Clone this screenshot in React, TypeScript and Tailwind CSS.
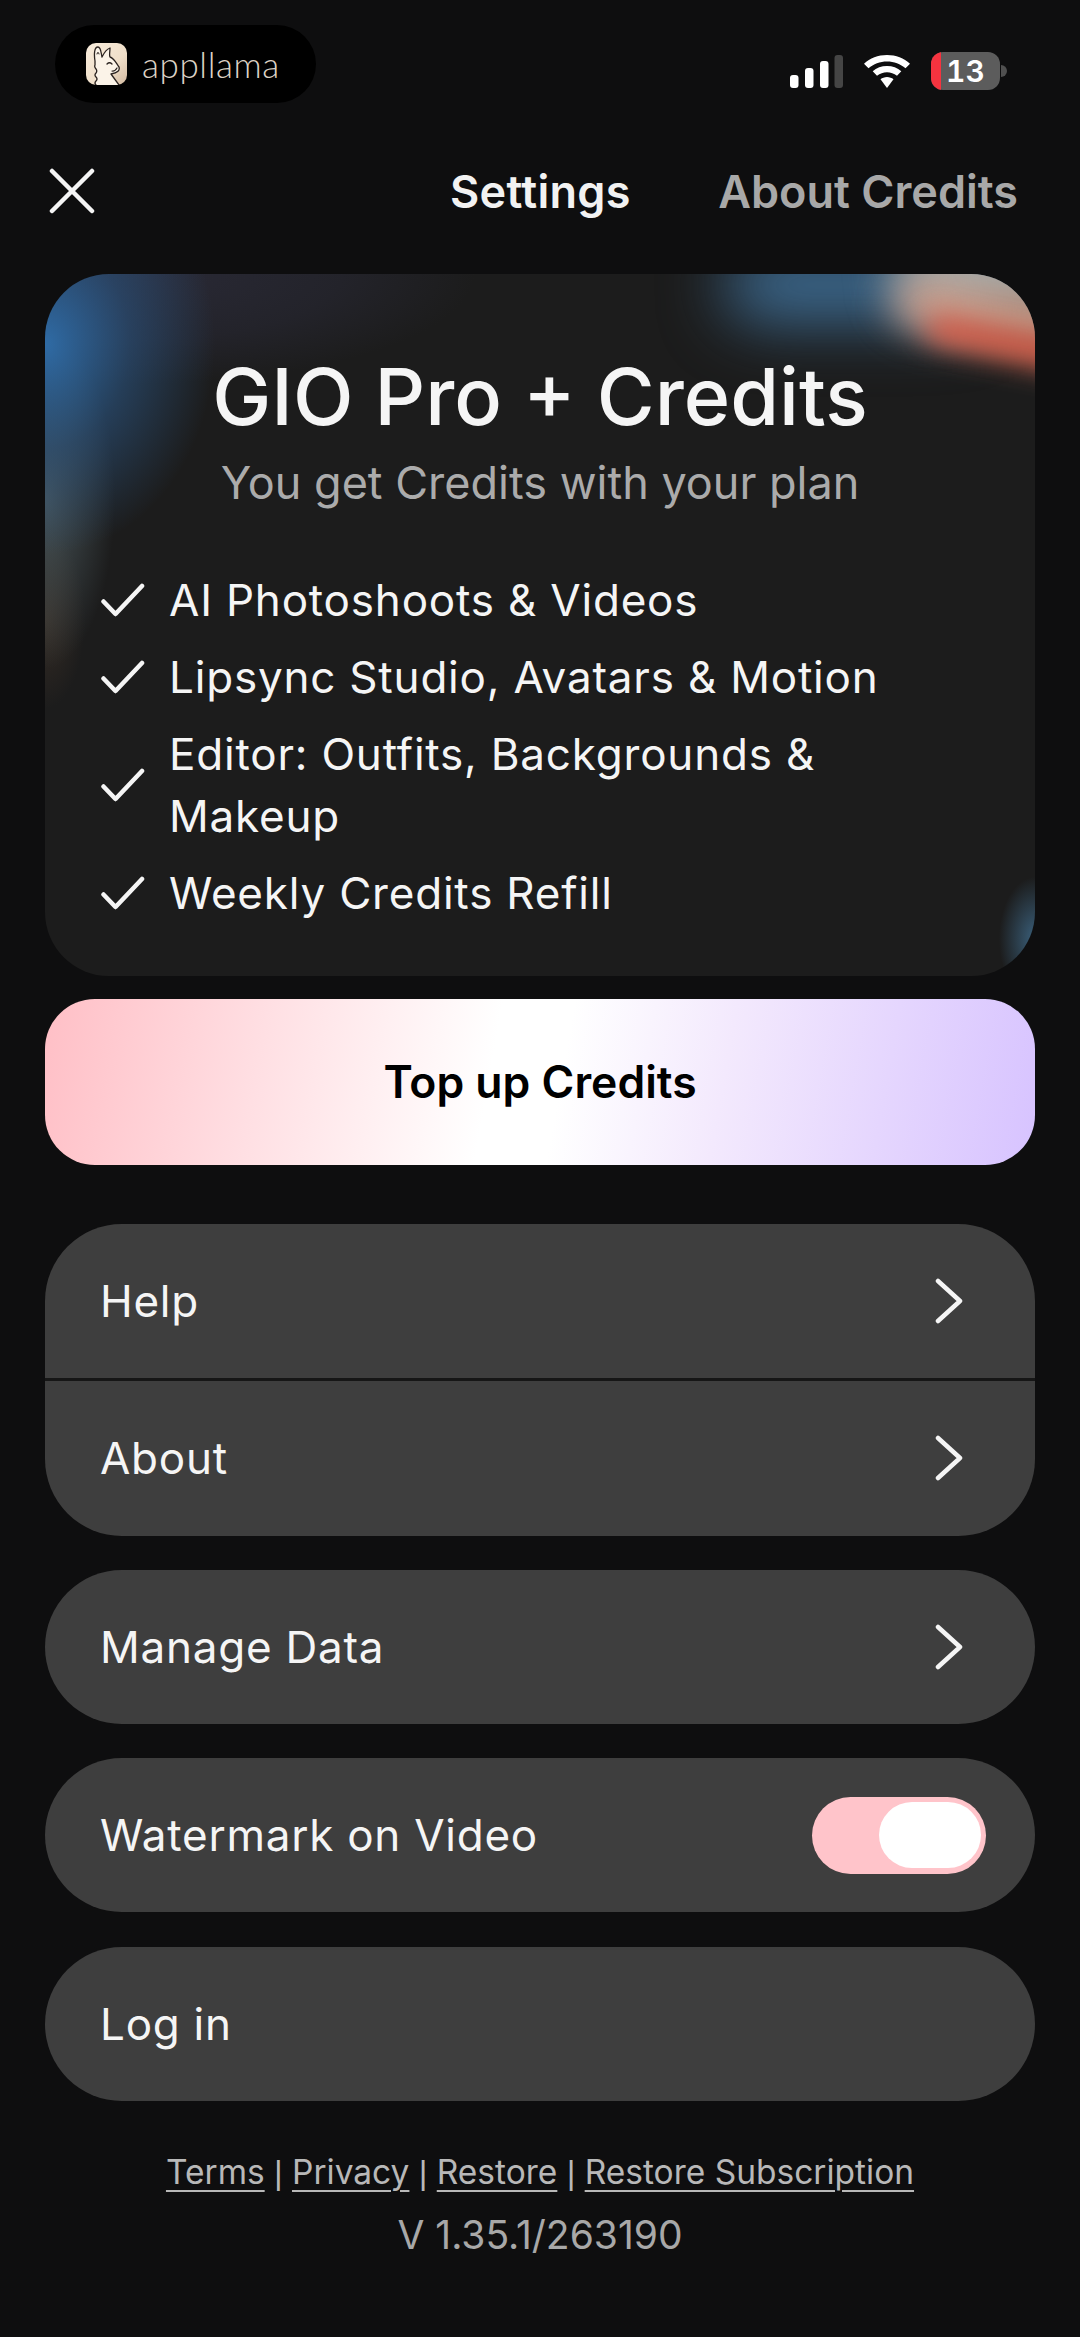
const font = "font-['Inter','Liberation_Sans',sans-serif]";

function Check() {
  return (
    <svg width="44" height="34" viewBox="0 0 44 34" fill="none" className="shrink-0">
      <path d="M2.5 18.5 L14.5 31 L41 3" stroke="#f5f5f5" strokeWidth="4.5" strokeLinecap="round" strokeLinejoin="round" />
    </svg>
  );
}

function Chevron() {
  return (
    <svg width="30" height="46" viewBox="0 0 30 46" fill="none">
      <path d="M4 3 L26 23 L4 43" stroke="#f5f5f5" strokeWidth="4.5" strokeLinecap="round" strokeLinejoin="round" />
    </svg>
  );
}

function Llama() {
  return (
    <svg width="41" height="42" viewBox="0 0 41 42">
      <defs>
        <linearGradient id="lg" x1="0" y1="0" x2="1" y2="1">
          <stop offset="0" stopColor="#f8ecdc" />
          <stop offset="0.6" stopColor="#f0dfc9" />
          <stop offset="1" stopColor="#d2b9a0" />
        </linearGradient>
      </defs>
      <rect width="41" height="42" rx="10" fill="url(#lg)" />
      <path d="M9 18 C8 12 8 4 12 4 C15 4 15 10 16 14 C18 10 21 6 24 5 C24 9 23 12 24 14 C28 15 30 20 33 24 C34 27 32 30 25 31 L33 42 L10 42 Z" fill="#fbf3e8" />
      <path d="M10 42 q-2 -2 0 -4 q2 -2 0 -4 q-2 -2 0 -4 q1.500 -2 0 -4 q-2 -2 -1 -4 L9 18 C8 12 8 4 12 4 C15 4 15 10 16 14 C18 10 21 6 24 5 C24 9 23 12 24 14 C28 15 30 20 33 24 C34 27 32 30 25 31 L33 42" fill="none" stroke="#2b2320" strokeWidth="1.300" strokeLinecap="round" strokeLinejoin="round" />
      <path d="M11 11 q1 -4 2 0" fill="none" stroke="#2b2320" strokeWidth="1" strokeLinecap="round" />
      <path d="M21 21 q2.500 -2.500 5 0" fill="none" stroke="#2b2320" strokeWidth="1.300" strokeLinecap="round" />
      <path d="M26 28 q3 0.500 5 -3" fill="none" stroke="#2b2320" strokeWidth="1.200" strokeLinecap="round" />
    </svg>
  );
}

function Row({ label, chevron = true }: { label: string; chevron?: boolean }) {
  return (
    <div className="h-[154px] flex items-center justify-between pl-[55px] pr-[71px]">
      <span className="text-[44px] tracking-[0.75px] leading-none text-[#f5f5f5]">{label}</span>
      {chevron && <Chevron />}
    </div>
  );
}

function Sep() {
  return <span className="font-['Liberation_Sans',sans-serif]"> | </span>;
}

function Link({ children }: { children: string }) {
  return <span className="underline decoration-2 underline-offset-[6px]">{children}</span>;
}

export default function App() {
  return (
    <div className={`w-[1080px] h-[2337px] bg-[#0e0e0f] overflow-hidden ${font}`}>
      {/* status bar */}
      <div className="h-[164px] flex items-start justify-between pt-[25px] pl-[55px] pr-[73px]">
        <div className="w-[261px] h-[78px] rounded-full bg-black flex items-center pl-[31px] gap-[15px]">
          <Llama />
          <span className="font-['Lato',sans-serif] font-light text-[35px] tracking-[0.6px] leading-none text-[#dcd2c5]">appllama</span>
        </div>
        <div className="flex items-center gap-[21px] pt-[27px]">
          <svg width="53" height="33" viewBox="0 0 53 33">
            <rect x="0" y="20" width="8.500" height="13" rx="3" fill="#fff" />
            <rect x="15" y="13" width="8.500" height="20" rx="3" fill="#fff" />
            <rect x="30" y="6" width="8.500" height="27" rx="3" fill="#fff" />
            <rect x="44.500" y="0" width="8.500" height="33" rx="3" fill="#454545" />
          </svg>
          <svg width="46" height="33" viewBox="0 0 46 36" preserveAspectRatio="none" fill="#fff">
            <path d="M23 0 C32 0 40 3.500 46 9.500 L41.500 14.500 C36.500 9.800 30 7 23 7 C16 7 9.500 9.800 4.500 14.500 L0 9.500 C6 3.500 14 0 23 0 Z" />
            <path d="M23 12 C28.500 12 33.500 14 37.300 17.700 L33 22.500 C30 20 26.700 18.700 23 18.700 C19.300 18.700 16 20 13 22.500 L8.700 17.700 C12.500 14 17.500 12 23 12 Z" />
            <path d="M23 24 C25.500 24 27.800 25 29.500 26.500 L23 36 L16.500 26.500 C18.200 25 20.500 24 23 24 Z" />
          </svg>
          <div className="flex items-center">
            <div className="relative w-[69px] h-[38px] rounded-[12px] bg-[#5c5c5c] overflow-hidden flex items-center justify-center">
              <div className="absolute left-0 top-0 bottom-0 w-[10px] bg-[#f5333f]" />
              <span className="text-[30px] font-semibold tabular-nums leading-none text-white">13</span>
            </div>
            <div className="w-[6px] h-[12px] ml-[1px] rounded-r-full bg-[#505050]" />
          </div>
        </div>
      </div>

      {/* header */}
      <div className="h-[50px] mt-[2px] flex items-center pl-[49px] pr-[62px]">
        <svg width="46" height="46" viewBox="0 0 46 46" fill="none">
          <path d="M3 3 L43 43 M43 3 L3 43" stroke="#f5f5f5" strokeWidth="4.5" strokeLinecap="round" />
        </svg>
        <span className="ml-[355px] text-[45px] tracking-[0.3px] font-semibold leading-none text-[#f2f2f2]">Settings</span>
        <span className="ml-auto text-[45px] font-semibold leading-none text-[#a8a8a8]">About Credits</span>
      </div>

      <div className="mx-[45px] mt-[58px] flex flex-col">
        {/* card */}
        <div className="relative h-[702px] rounded-[64px] overflow-hidden bg-[#1c1c1c] bg-[radial-gradient(ellipse_170px_210px_at_0%_70px,#2f6ba5_0%,#2b548099_50%,transparent_100%),radial-gradient(ellipse_340px_110px_at_90px_0px,#37375080_0%,#33334a50_60%,transparent_100%),radial-gradient(ellipse_70px_170px_at_0%_225px,#5a6c72b0_0%,transparent_100%),radial-gradient(ellipse_40px_90px_at_0%_345px,#54403070_0%,transparent_100%),radial-gradient(ellipse_36px_62px_at_100%_665px,#3a5f7a_0%,transparent_100%)] pt-[77px]">
          {/* corner glow */}
          <div className="absolute right-[50px] top-[-24px] w-[260px] h-[70px] rounded-full bg-[#3f7099] blur-[32px]" />
          <div className="absolute right-[-60px] top-[-40px] w-[200px] h-[80px] rounded-full bg-[#a3aeae] blur-[24px]" />
          <div className="absolute right-[-70px] top-[18px] w-[210px] h-[50px] rotate-[10deg] rounded-full bg-[#d09f8a] blur-[20px]" />
          <div className="absolute right-[-70px] top-[58px] w-[180px] h-[26px] rotate-[12deg] rounded-full bg-[#e05a45] blur-[14px]" />

          <h1 className="relative text-center text-[79px] font-medium leading-[90px] text-[#f5f5f5]">GIO Pro + Credits</h1>
          <p className="relative text-center text-[45px] leading-[50px] mt-[17px] text-[#ababab]">You get Credits with your plan</p>
          <ul className="relative mt-[53px] pl-[56px] pr-[100px] flex flex-col">
            {[
              "AI Photoshoots & Videos",
              "Lipsync Studio, Avatars & Motion",
              "Editor: Outfits, Backgrounds & Makeup",
              "Weekly Credits Refill",
            ].map((t) => (
              <li key={t} className="flex items-center gap-[24px] py-[7.5px]">
                <Check />
                <span className="text-[44px] tracking-[0.8px] leading-[62px] text-[#f5f5f5]">{t}</span>
              </li>
            ))}
          </ul>
        </div>

        {/* button */}
        <div className="h-[166px] mt-[23px] rounded-[50px] flex items-center justify-center bg-[linear-gradient(100deg,#ffbfc6_0%,#ffdfe3_22%,#ffffff_45%,#ffffff_52%,#f3e9fd_68%,#d7c3ff_100%)]">
          <span className="text-[44.5px] font-semibold text-black">Top up Credits</span>
        </div>

        {/* groups */}
        <div className="mt-[59px] rounded-[77px] bg-[#3e3e3e] overflow-hidden pb-[1px]">
          <Row label="Help" />
          <div className="h-[3px] bg-[#161616]" />
          <Row label="About" />
        </div>
        <div className="mt-[34px] rounded-[77px] bg-[#3e3e3e]">
          <Row label="Manage Data" />
        </div>
        <div className="mt-[34px] rounded-[77px] bg-[#3e3e3e] h-[154px] flex items-center justify-between pl-[55px] pr-[49px]">
          <span className="text-[44px] tracking-[0.75px] leading-none text-[#f5f5f5]">Watermark on Video</span>
          <div className="w-[174px] h-[77px] rounded-full bg-[#ffc4ca] flex items-center justify-end pr-[5px]">
            <div className="w-[102px] h-[66px] rounded-full bg-white" />
          </div>
        </div>
        <div className="mt-[35px] rounded-[77px] bg-[#3e3e3e]">
          <Row label="Log in" chevron={false} />
        </div>
      </div>

      {/* footer */}
      <div className="mt-[46px] text-center text-[33.5px] leading-[50px] text-[#b8b8b8]">
        <p>
          <Link>Terms</Link>
          <Sep />
          <Link>Privacy</Link>
          <Sep />
          <Link>Restore</Link>
          <Sep />
          <Link>Restore Subscription</Link>
        </p>
        <p className="mt-[12px] text-[39px] text-[#a8a8a8]">V 1.35.1/263190</p>
      </div>
    </div>
  );
}
